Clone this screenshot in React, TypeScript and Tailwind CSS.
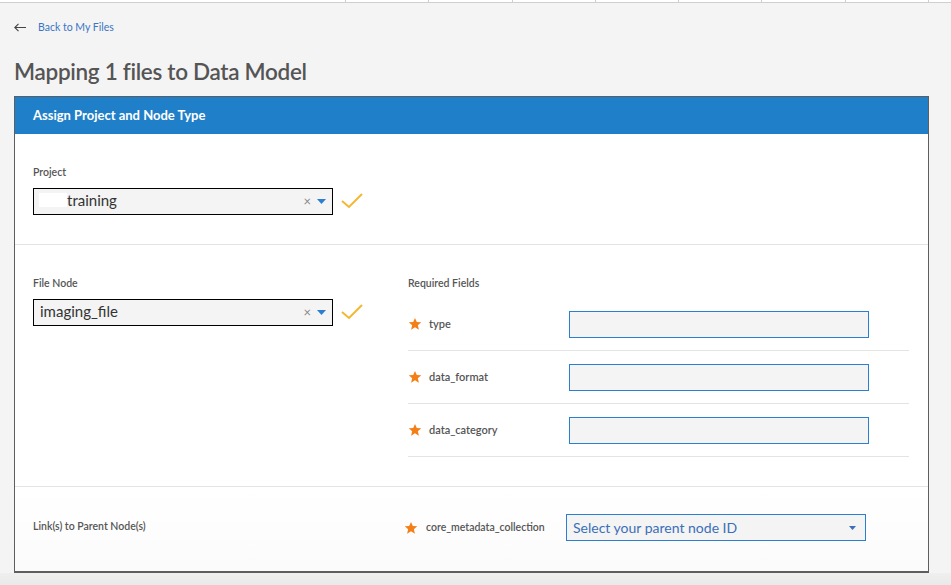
import React from "react";

const font = { fontFamily: "Lato, 'Noto Sans', sans-serif" };

function Check() {
  return (
    <svg width="24" height="18" viewBox="0 0 24 18" className="shrink-0">
      <path d="M2 9 L9 15 L22 2" fill="none" stroke="#f5b731" strokeWidth="2" />
    </svg>
  );
}

function Star() {
  return (
    <svg width="14" height="14" viewBox="0 0 24 24" className="shrink-0">
      <path
        d="M12 1.5l3.1 7.1 7.6.6-5.8 5 1.8 7.5L12 17.7l-6.7 4 1.8-7.5-5.8-5 7.6-.6z"
        fill="#f57f17"
      />
    </svg>
  );
}

function Caret({ color = "#2a7fd0", w = 9, h = 5 }: { color?: string; w?: number; h?: number }) {
  return (
    <svg width={w} height={h} viewBox="0 0 9 5">
      <path d="M0 0 L9 0 L4.5 5 Z" fill={color} />
    </svg>
  );
}

function SelectBox({ children }: { children: React.ReactNode }) {
  return (
    <div className="flex h-[27px] w-[300px] items-center border border-black bg-[#f4f4f4] pl-[6px] pr-[6px]">
      <div className="flex-1 pb-[2px] text-[15px] leading-none text-[#333]">{children}</div>
      <span className="mr-[6px] text-[13px] leading-none text-[#888]">×</span>
      <Caret />
    </div>
  );
}

function ReqRow({ label }: { label: string }) {
  return (
    <div className="flex h-[53px] items-center border-b border-[#e3e3e3] pt-[1px]">
      <div className="flex w-[161px] items-center gap-[7px]">
        <Star />
        <span className="text-[11px] font-semibold text-[#555]">{label}</span>
      </div>
      <div className="h-[27px] w-[300px] border border-[#2a7fd0] bg-[#f4f4f4]" />
    </div>
  );
}

export default function App() {
  return (
    <div className="min-h-[585px] w-[951px] bg-[#f4f4f4]" style={font}>
      <div className="relative h-[3px] border-b border-[#cfcfcf] bg-white">
        {[345, 428, 512, 595, 678, 761, 845, 928].map((x) => (
          <div key={x} className="absolute top-0 h-[3px] w-px bg-[#cfcfcf]" style={{ left: x }} />
        ))}
      </div>
      <div className="flex h-[44px] items-center pl-[14px] pt-[5px]">
        <svg width="12" height="9" viewBox="0 0 12 9">
          <path d="M12 4.5 H1 M4.5 0.8 L0.8 4.5 L4.5 8.2" fill="none" stroke="#444" strokeWidth="1.1" />
        </svg>
        <span className="ml-[12px] text-[10.5px] text-[#3a75c4]">Back to My Files</span>
      </div>
      <h1 className="mt-[14px] h-[35px] pl-[14px] text-[22.5px] font-semibold leading-none tracking-[-0.3px] text-[#555]">
        Mapping 1 files to Data Model
      </h1>
      <div className="ml-[14px] w-[915px] border-x border-t border-b-2 border-[#5e5e5e] bg-white">
        <div className="flex h-[37px] items-center bg-[#1f7fc8] pl-[18px] text-[13px] font-bold text-white">
          Assign Project and Node Type
        </div>
        <div className="h-[111px] border-b border-[#e3e3e3] pl-[18px] pt-[31px]">
          <div className="text-[10.5px] font-semibold text-[#555]">Project</div>
          <div className="mt-[7px] flex items-center gap-[7px]">
            <SelectBox>
              <span className="flex items-center">
                <span className="-ml-[1px] inline-block h-[14px] w-[28px] bg-white" />
                training
              </span>
            </SelectBox>
            <Check />
          </div>
        </div>
        <div className="flex h-[242px] border-b border-[#e3e3e3] pl-[18px] pt-[31px]">
          <div className="w-[375px]">
            <div className="text-[10.5px] font-semibold text-[#555]">File Node</div>
            <div className="mt-[7px] flex items-center gap-[7px]">
              <SelectBox>imaging_file</SelectBox>
              <Check />
            </div>
          </div>
          <div className="w-[501px]">
            <div className="text-[10.5px] font-semibold text-[#555]">Required Fields</div>
            <div className="mt-[6px]">
              <ReqRow label="type" />
              <ReqRow label="data_format" />
              <ReqRow label="data_category" />
            </div>
          </div>
        </div>
        <div className="flex h-[84px] items-center bg-gradient-to-b from-white to-[#fbfbfb] pb-[3px] pl-[18px]">
          <div className="w-[371px] pb-[2px] text-[10.5px] font-semibold text-[#555]">
            Link(s) to Parent Node(s)
          </div>
          <div className="flex items-center gap-[8px]">
            <Star />
            <span className="w-[140px] text-[10.5px] font-semibold text-[#555]">core_metadata_collection</span>
          </div>
          <div className="flex h-[27px] w-[300px] items-center border border-[#2a7fd0] bg-[#f4f4f4] pl-[6px] pr-[9px]">
            <span className="flex-1 pb-[1px] text-[14px] text-[#3a6fb8]">Select your parent node ID</span>
            <Caret color="#3a6fb8" w={7} h={4} />
          </div>
        </div>
      </div>
      <div className="h-[12px] bg-gradient-to-b from-[#efefef] to-[#e9e9e9]" />
    </div>
  );
}
